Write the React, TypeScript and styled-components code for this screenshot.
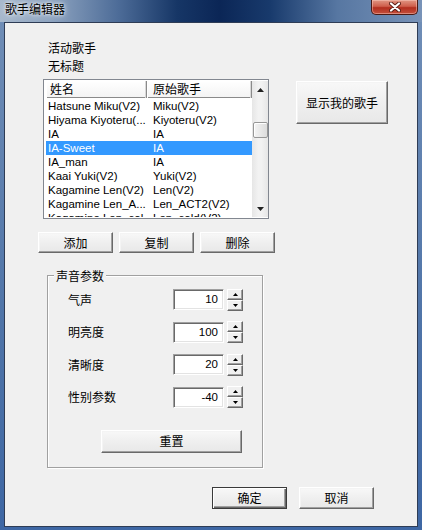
import styled, { createGlobalStyle } from 'styled-components';

const uiFont = `'Noto Sans CJK SC', 'Liberation Sans', sans-serif`;
const listFont = `'Liberation Sans', 'Noto Sans CJK SC', sans-serif`;

const GlobalStyle = createGlobalStyle`
  html, body {
    margin: 0;
    padding: 0;
  }

  body {
    width: 422px;
    height: 530px;
    overflow: hidden;
    background: #5f80ad;
    font-family: ${uiFont};
  }
`;

const Window = styled.div`
  width: 422px;
  height: 530px;
  display: flex;
  flex-direction: column;
  box-sizing: border-box;
`;

const TitleBar = styled.div`
  height: 22px;
  flex-shrink: 0;
  display: flex;
  align-items: flex-start;
  justify-content: space-between;
  padding: 0 4px 0 5px;
  box-sizing: border-box;
  background: linear-gradient(
    90deg,
    #a7b8cc 0%,
    #8ea4c0 12%,
    #4d6c98 28%,
    #163666 42%,
    #0b2656 52%,
    #183a6c 64%,
    #5777a2 80%,
    #7893b8 100%
  );
`;

const Title = styled.span`
  font-size: 12px;
  line-height: 18px;
  color: #000;
  text-shadow: 0 0 6px rgba(255, 255, 255, 0.9), 0 0 3px rgba(255, 255, 255, 0.9);
`;

const CloseButton = styled.div`
  width: 47px;
  height: 15px;
  box-sizing: border-box;
  display: flex;
  align-items: center;
  justify-content: center;
  border: 1px solid #4a1a14;
  border-top: none;
  border-radius: 0 0 5px 5px;
  background: linear-gradient(180deg, #e09683 0%, #cf5f4c 45%, #b22e1e 55%, #c4503c 100%);
  box-shadow: inset 0 0 0 1px rgba(255, 210, 200, 0.45);
`;

const Frame = styled.div`
  flex: 1;
  display: flex;
  padding: 0 4px 3px 4px;
  background: linear-gradient(180deg, #6f8db6 0%, #4f74a8 60%, #3e67a4 100%);
`;

const Client = styled.div`
  flex: 1;
  display: flex;
  flex-direction: column;
  align-items: flex-start;
  box-sizing: border-box;
  border: 1px solid #2e3c55;
  background: #f0f0f0;
  padding: 16px 0 0 33px;
`;

const TopRow = styled.div`
  display: flex;
  align-items: flex-start;
  margin-left: 5px;
`;

const LeftCol = styled.div`
  display: flex;
  flex-direction: column;
`;

const Label = styled.div`
  font-size: 12px;
  line-height: 18px;
  color: #000;
  margin-left: 5px;
`;

const ListBox = styled.div`
  margin-top: 4px;
  width: 226px;
  height: 140px;
  box-sizing: border-box;
  border: 1px solid #828790;
  padding: 1px 0 1px 2px;
  background: #fff;
  display: flex;
  overflow: hidden;
`;

const Table = styled.div`
  width: 206px;
  display: flex;
  flex-direction: column;
  overflow: hidden;
`;

const HeaderRow = styled.div`
  display: flex;
  height: 17px;
  flex-shrink: 0;
  margin-bottom: 1px;
  background: linear-gradient(180deg, #ffffff 0%, #f3f3f3 100%);
  box-shadow: inset 0 -1px 0 #8a8a8a, inset 0 1px 0 #fff;
`;

const HeaderCell = styled.div<{ $w: number; $pad: number }>`
  width: ${(p) => p.$w}px;
  box-sizing: border-box;
  padding-left: ${(p) => p.$pad}px;
  font-size: 12px;
  line-height: 16px;
  color: #000;
  border-right: 1px solid #8a8a8a;
  box-shadow: inset -1px 0 0 #d8d8d8, inset 1px 0 0 #fff;
  white-space: nowrap;
  overflow: hidden;
`;

const Row = styled.div<{ $selected?: boolean }>`
  display: flex;
  height: 14px;
  flex-shrink: 0;
  background: ${(p) => (p.$selected ? '#3399ff' : 'transparent')};
  color: ${(p) => (p.$selected ? '#fff' : '#000')};
`;

const Cell = styled.div<{ $w: number; $pad: number }>`
  width: ${(p) => p.$w}px;
  box-sizing: border-box;
  padding-left: ${(p) => p.$pad}px;
  font-family: ${listFont};
  font-size: 11.5px;
  line-height: 14px;
  white-space: nowrap;
  overflow: hidden;
`;

const ScrollBar = styled.div`
  width: 16px;
  display: flex;
  flex-direction: column;
  background: linear-gradient(90deg, #e6e6e6 0%, #f2f2f2 40%, #f2f2f2 60%, #e6e6e6 100%);
`;

const ScrollArrow = styled.div`
  height: 17px;
  flex-shrink: 0;
  display: flex;
  align-items: center;
  justify-content: center;
`;

const ScrollTrack = styled.div`
  flex: 1;
`;

const ScrollThumb = styled.div`
  margin: 24px 0 0 1px;
  width: 15px;
  height: 16px;
  box-sizing: border-box;
  border: 1px solid #979797;
  border-radius: 2px;
  background: linear-gradient(90deg, #f4f4f4 0%, #e8e8e8 50%, #dcdcdc 100%);
  box-shadow: inset 1px 1px 0 #fff;
`;

const Button = styled.button<{ $w: number; $h: number; $default?: boolean }>`
  width: ${(p) => p.$w}px;
  height: ${(p) => p.$h}px;
  padding: 0;
  box-sizing: border-box;
  font-family: ${uiFont};
  font-size: 12px;
  line-height: 1;
  color: #000;
  background: linear-gradient(180deg, #f8f8f8 0%, #efefef 50%, #e8e8e8 100%);
  border: 1px solid;
  border-color: ${(p) =>
    p.$default ? '#3a3a3a' : '#ffffff #696969 #696969 #ffffff'};
  box-shadow: ${(p) =>
    p.$default
      ? 'inset 1px 1px 0 #fff, inset -1px -1px 0 #696969, inset -2px -2px 0 #a0a0a0'
      : 'inset -1px -1px 0 #a0a0a0, inset 1px 1px 0 #f4f4f4'};
  cursor: default;
`;

const SideButton = styled(Button)`
  margin: 42px 0 0 27px;
`;

const ButtonRow = styled.div<{ $gap: number }>`
  display: flex;
  gap: ${(p) => p.$gap}px;
`;

const EditButtons = styled(ButtonRow)`
  margin-top: 13px;
`;

const GroupBox = styled.div`
  position: relative;
  margin: 22px 0 0 9px;
  width: 216px;
  height: 193px;
  box-sizing: border-box;
  border: 1px solid #a0a0a0;
  box-shadow: inset 1px 1px 0 #fff, 1px 1px 0 #fff;
  padding: 13px 0 0 20px;
  display: flex;
  flex-direction: column;
  align-items: flex-start;
`;

const GroupTitle = styled.span`
  position: absolute;
  top: -9px;
  left: 6px;
  padding: 0 2px;
  background: #f0f0f0;
  font-size: 12px;
  line-height: 18px;
  color: #000;
`;

const ParamList = styled.div`
  display: flex;
  flex-direction: column;
  gap: 11.5px;
`;

const ParamRow = styled.div`
  display: flex;
  align-items: center;
  height: 21px;
`;

const ParamLabel = styled.span`
  width: 105px;
  font-size: 12px;
  line-height: 18px;
  color: #000;
`;

const ValueBox = styled.div`
  width: 51px;
  height: 21px;
  box-sizing: border-box;
  border: 1px solid;
  border-color: #a0a0a0 #ffffff #ffffff #a0a0a0;
  box-shadow: inset 1px 1px 0 #696969, inset -1px -1px 0 #e3e3e3;
  background: #fff;
  padding-right: 5px;
  text-align: right;
  font-family: ${listFont};
  font-size: 11.5px;
  line-height: 19px;
  color: #000;
`;

const Spinner = styled.div`
  margin-left: 3px;
  display: flex;
  flex-direction: column;
`;

const SpinButton = styled.div`
  width: 16px;
  height: 11px;
  box-sizing: border-box;
  display: flex;
  align-items: center;
  justify-content: center;
  border: 1px solid;
  border-color: #ffffff #696969 #696969 #ffffff;
  box-shadow: inset -1px -1px 0 #a0a0a0;
  background: #f0f0f0;
`;

const ResetButton = styled(Button)`
  margin: 22px 0 0 33px;
`;

const DialogButtons = styled(ButtonRow)`
  align-self: stretch;
  justify-content: flex-end;
  margin-top: 19px;
  padding-right: 43px;
`;

type Singer = { name: string; base: string; selected?: boolean };

const singers: Singer[] = [
  { name: 'Hatsune Miku(V2)', base: 'Miku(V2)' },
  { name: 'Hiyama Kiyoteru(...', base: 'Kiyoteru(V2)' },
  { name: 'IA', base: 'IA' },
  { name: 'IA-Sweet', base: 'IA', selected: true },
  { name: 'IA_man', base: 'IA' },
  { name: 'Kaai Yuki(V2)', base: 'Yuki(V2)' },
  { name: 'Kagamine Len(V2)', base: 'Len(V2)' },
  { name: 'Kagamine Len_A...', base: 'Len_ACT2(V2)' },
  { name: 'Kagamine Len_col...', base: 'Len_cold(V2)' },
];

const params = [
  { label: '气声', value: '10' },
  { label: '明亮度', value: '100' },
  { label: '清晰度', value: '20' },
  { label: '性别参数', value: '-40' },
];

function Arrow({ up, w, h, color = '#000' }: { up: boolean; w: number; h: number; color?: string }) {
  const d = up ? `M0 ${h} L${w / 2} 0 L${w} ${h} Z` : `M0 0 L${w / 2} ${h} L${w} 0 Z`;
  return (
    <svg width={w} height={h} viewBox={`0 0 ${w} ${h}`}>
      <path d={d} fill={color} />
    </svg>
  );
}

function CloseGlyph() {
  return (
    <svg width="12" height="10" viewBox="0 0 12 10">
      <path d="M2 1.5 L10 8.5 M10 1.5 L2 8.5" stroke="#5a1d14" strokeWidth="4" strokeLinecap="round" />
      <path d="M2 1.5 L10 8.5 M10 1.5 L2 8.5" stroke="#fff" strokeWidth="2.2" strokeLinecap="round" />
    </svg>
  );
}

export default function App() {
  return (
    <Window>
      <GlobalStyle />
      <TitleBar>
        <Title>歌手编辑器</Title>
        <CloseButton>
          <CloseGlyph />
        </CloseButton>
      </TitleBar>
      <Frame>
        <Client>
          <TopRow>
            <LeftCol>
              <Label>活动歌手</Label>
              <Label>无标题</Label>
              <ListBox>
                <Table>
                  <HeaderRow>
                    <HeaderCell $w={101} $pad={4}>姓名</HeaderCell>
                    <HeaderCell $w={105} $pad={6}>原始歌手</HeaderCell>
                  </HeaderRow>
                  {singers.map((s) => (
                    <Row key={s.name} $selected={s.selected}>
                      <Cell $w={101} $pad={2}>{s.name}</Cell>
                      <Cell $w={105} $pad={6}>{s.base}</Cell>
                    </Row>
                  ))}
                </Table>
                <ScrollBar>
                  <ScrollArrow>
                    <Arrow up w={7} h={4} color="#222" />
                  </ScrollArrow>
                  <ScrollTrack>
                    <ScrollThumb />
                  </ScrollTrack>
                  <ScrollArrow>
                    <Arrow up={false} w={7} h={4} color="#222" />
                  </ScrollArrow>
                </ScrollBar>
              </ListBox>
            </LeftCol>
            <SideButton $w={92} $h={43}>显示我的歌手</SideButton>
          </TopRow>

          <EditButtons $gap={6}>
            <Button $w={75} $h={21}>添加</Button>
            <Button $w={75} $h={21}>复制</Button>
            <Button $w={75} $h={21}>删除</Button>
          </EditButtons>

          <GroupBox>
            <GroupTitle>声音参数</GroupTitle>
            <ParamList>
              {params.map((p) => (
                <ParamRow key={p.label}>
                  <ParamLabel>{p.label}</ParamLabel>
                  <ValueBox>{p.value}</ValueBox>
                  <Spinner>
                    <SpinButton>
                      <Arrow up w={5} h={3} />
                    </SpinButton>
                    <SpinButton>
                      <Arrow up={false} w={5} h={3} />
                    </SpinButton>
                  </Spinner>
                </ParamRow>
              ))}
            </ParamList>
            <ResetButton $w={141} $h={23}>重置</ResetButton>
          </GroupBox>

          <DialogButtons $gap={12}>
            <Button $w={75} $h={22} $default>确定</Button>
            <Button $w={75} $h={22}>取消</Button>
          </DialogButtons>
        </Client>
      </Frame>
    </Window>
  );
}
